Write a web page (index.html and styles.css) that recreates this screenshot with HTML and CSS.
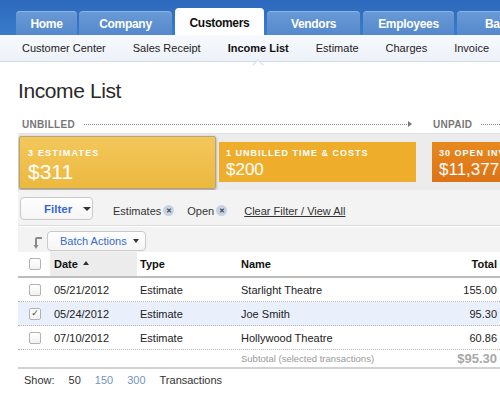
FILE: index.html
```
<!DOCTYPE html>
<html>
<head>
<meta charset="utf-8">
<link rel="stylesheet" href="styles.css">
</head>
<body>
<div class="page">
  <div class="topbar">
    <div class="tab t-home">Home</div>
    <div class="tab t-company">Company</div>
    <div class="tab active t-customers">Customers</div>
    <div class="tab t-vendors">Vendors</div>
    <div class="tab t-employees">Employees</div>
    <div class="tab t-banking">Banking</div>
  </div>
  <div class="subnav">
    <span class="sn">Customer Center</span>
    <span class="sn">Sales Receipt</span>
    <span class="sn current">Income List<span class="notch"></span></span>
    <span class="sn">Estimate</span>
    <span class="sn">Charges</span>
    <span class="sn">Invoice</span>
  </div>
  <h1 class="title">Income List</h1>
  <div class="stages">
    <span class="stage">UNBILLED</span>
    <span class="dots dots-long"><span class="arrowhead"></span></span>
    <span class="stage">UNPAID</span>
    <span class="dots"></span>
  </div>
  <div class="panel">
    <div class="cards">
      <div class="card card-est">
        <div class="card-label">3 ESTIMATES</div>
        <div class="card-amt">$311</div>
      </div>
      <div class="card card-time">
        <div class="card-label">1 UNBILLED TIME &amp; COSTS</div>
        <div class="card-amt">$200</div>
      </div>
      <div class="card card-open">
        <div class="card-label">30 OPEN INVOICES</div>
        <div class="card-amt">$11,377</div>
      </div>
    </div>
    <div class="filters">
      <button class="btn filter-btn">Filter <span class="caret"></span></button>
      <span class="chip">Estimates<span class="chip-x">&#x2715;</span></span>
      <span class="chip">Open<span class="chip-x">&#x2715;</span></span>
      <a class="clear">Clear Filter / View All</a>
    </div>
    <div class="batch">
      <svg class="batch-arrow" width="10" height="14" viewBox="0 0 10 14">
        <path d="M9 2 H4 Q3 2 3 3 V10" fill="none" stroke="#8a8a8a" stroke-width="2"/>
        <path d="M0.5 9 L3 13 L5.5 9 Z" fill="#8a8a8a"/>
      </svg>
      <button class="btn batch-btn">Batch Actions <span class="caret small"></span></button>
    </div>
    <div class="grid head">
      <div class="c-chk"><span class="chk"></span></div>
      <div class="c-date sorted">Date <span class="sort"></span></div>
      <div class="c-type">Type</div>
      <div class="c-name">Name</div>
      <div class="c-total">Total</div>
    </div>
    <div class="grid row">
      <div class="c-chk"><span class="chk"></span></div>
      <div class="c-date">05/21/2012</div>
      <div class="c-type">Estimate</div>
      <div class="c-name">Starlight Theatre</div>
      <div class="c-total">155.00</div>
    </div>
    <div class="grid row selected">
      <div class="c-chk"><span class="chk checked">&#x2713;</span></div>
      <div class="c-date">05/24/2012</div>
      <div class="c-type">Estimate</div>
      <div class="c-name">Joe Smith</div>
      <div class="c-total">95.30</div>
    </div>
    <div class="grid row">
      <div class="c-chk"><span class="chk"></span></div>
      <div class="c-date">07/10/2012</div>
      <div class="c-type">Estimate</div>
      <div class="c-name">Hollywood Theatre</div>
      <div class="c-total">60.86</div>
    </div>
    <div class="grid subtotal">
      <div class="c-chk"></div>
      <div class="c-date"></div>
      <div class="c-type"></div>
      <div class="c-name">Subtotal (selected transactions)</div>
      <div class="c-total">$95.30</div>
    </div>
  </div>
  <div class="show">
    <span>Show:</span>
    <span>50</span>
    <span class="link">150</span>
    <span class="link">300</span>
    <span>Transactions</span>
  </div>
</div>
</body>
</html>
```
FILE: styles.css
```
* { box-sizing: border-box; }
html, body { margin: 0; padding: 0; }
body {
  width: 500px;
  height: 400px;
  overflow: hidden;
  background: #fff;
  font-family: "Liberation Sans", Arial, sans-serif;
  color: #222;
}
.page { width: 500px; }

.topbar {
  height: 35px;
  background: linear-gradient(#2c68bb, #3a7dcc);
  display: flex;
  align-items: flex-end;
  padding-left: 16px;
  gap: 3px;
  white-space: nowrap;
  overflow: hidden;
}
.tab {
  flex: none;
  height: 24px;
  border-radius: 4px 4px 0 0;
  background: linear-gradient(#6a9ad6, #5489cc);
  color: #fff;
  font-weight: bold;
  font-size: 12px;
  letter-spacing: -0.3px;
  display: flex;
  align-items: center;
  justify-content: center;
  padding-top: 1px;
  box-shadow: inset 0 1px 0 rgba(255,255,255,0.25);
}
.t-home { width: 61px; }
.t-company { width: 93px; margin-left: -1px; }
.t-customers { width: 89px; }
.t-vendors { width: 93px; }
.t-employees { width: 91px; }
.t-banking { width: 91px; justify-content: flex-start; padding-left: 28px; }
.tab.active {
  height: 27px;
  background: #fff;
  color: #111;
  padding-top: 3px;
  box-shadow: none;
}

.subnav {
  height: 27px;
  background: linear-gradient(#f7f9fd, #edf2f9);
  border-bottom: 1px solid #cfdbea;
  display: flex;
  align-items: center;
  padding-left: 22px;
  gap: 27px;
  font-size: 11px;
  color: #222;
  white-space: nowrap;
}
.sn { position: relative; }
.sn.current { font-weight: bold; color: #111; }
.notch {
  position: absolute;
  left: 26px;
  top: 19px;
  width: 8px;
  height: 8px;
  background: #fff;
  border-left: 1px solid #cfdbea;
  border-top: 1px solid #cfdbea;
  transform: rotate(45deg);
}

.title {
  margin: 0;
  padding: 15px 0 0 18px;
  font-size: 21px;
  font-weight: normal;
  color: #2a2a2a;
  line-height: 28px;
  letter-spacing: -0.4px;
}

.stages {
  display: flex;
  align-items: center;
  padding-left: 22px;
  height: 12px;
  margin-top: 13px;
  font-size: 10px;
  font-weight: bold;
  color: #777;
  letter-spacing: 0.3px;
}
.dots {
  flex: 1;
  border-top: 1px dotted #8a8a8a;
  margin: 0 0 0 9px;
  position: relative;
  height: 0;
}
.dots-long { flex: none; width: 325px; margin-right: 24px; }
.arrowhead {
  position: absolute;
  right: -3px;
  top: -4px;
  width: 0; height: 0;
  border-left: 4px solid #777;
  border-top: 3px solid transparent;
  border-bottom: 3px solid transparent;
}

.panel {
  margin-left: 18px;
  margin-top: 3px;
}
.cards {
  background: #ececec;
  height: 57px;
  display: flex;
  align-items: center;
  gap: 3px;
  padding-left: 1px;
  border-top: 1px solid #e2e2e2;
  overflow: hidden;
  white-space: nowrap;
}
.card {
  flex: none;
  height: 40px;
  padding: 6px 0 0 7px;
  color: #fff;
  overflow: hidden;
}
.card-label {
  font-size: 9px;
  font-weight: bold;
  letter-spacing: 1px;
  line-height: 11px;
}
.card-amt {
  font-size: 17px;
  line-height: 20px;
  margin-top: 1px;
}
.card-est {
  width: 197px;
  height: 53px;
  background: linear-gradient(#f3c75c, #ecb93f);
  border: 1px solid #b7a37a;
  box-shadow: 0 1px 3px rgba(0,0,0,0.4);
  border-radius: 2px;
  padding: 11px 0 0 8px;
}
.card-est .card-label { letter-spacing: 1.2px; }
.card-est .card-amt { font-size: 21px; line-height: 24px; margin-top: 1px; }
.card-time { width: 197px; background: #eeae2c; }
.card-open { width: 80px; background: linear-gradient(#e7891f, #dc7317); margin-left: 13px; }

.filters {
  height: 36px;
  background: #f3f3f3;
  display: flex;
  align-items: center;
  padding-left: 2px;
  font-size: 11px;
  color: #333;
  border-bottom: 1px solid #dedede;
}
.btn {
  font-family: inherit;
  background: linear-gradient(#ffffff, #f5f5f5);
  border: 1px solid #c9c9c9;
  border-radius: 4px;
  display: flex;
  align-items: center;
  color: #3569d4;
  padding: 0;
}
.filter-btn {
  width: 73px;
  height: 23px;
  font-size: 11.5px;
  font-weight: bold;
  padding-left: 23px;
  gap: 11px;
  margin-top: 2px;
}
.caret {
  width: 0; height: 0;
  border-top: 4px solid #333;
  border-left: 4px solid transparent;
  border-right: 4px solid transparent;
}
.caret.small { border-top-width: 4px; border-left-width: 3.5px; border-right-width: 3.5px; }
.chip { display: flex; align-items: center; margin-top: 6px; }
.chip:first-of-type { margin-left: 20px; }
.chip + .chip { margin-left: 13px; }
.chip-x {
  width: 11px; height: 11px;
  border-radius: 50%;
  background: #c9d3df;
  color: #3a4a60;
  font-size: 7px;
  font-weight: bold;
  display: flex;
  align-items: center;
  justify-content: center;
  margin-left: 2px;
}
.clear {
  margin-left: 17px;
  margin-top: 6px;
  text-decoration: underline;
  color: #333;
}

.batch {
  height: 26px;
  background: #f3f3f3;
  border-top: 1px solid #fff;
  display: flex;
  align-items: center;
  padding-left: 15px;
}
.batch-arrow { margin-top: 7px; margin-right: 4px; }
.batch-btn {
  width: 99px;
  height: 20px;
  font-size: 11px;
  padding-left: 12px;
  gap: 6px;
  margin-top: 2px;
}

.grid {
  display: grid;
  grid-template-columns: 32px 87px 101px 1fr 90px;
  align-items: center;
  font-size: 11px;
}
.head {
  height: 26px;
  font-weight: bold;
  color: #111;
  border-bottom: 2px solid #bdbdbd;
}
.head > div { height: 100%; display: flex; align-items: center; }
.sorted { background: #ececec; }
.sort {
  display: inline-block;
  width: 0; height: 0;
  border-bottom: 4px solid #333;
  border-left: 3.5px solid transparent;
  border-right: 3.5px solid transparent;
  margin-left: 5px;
  margin-top: -2px;
}
.c-chk { padding-left: 11px; display: flex; align-items: center; }
.c-date { padding-left: 4px; }
.c-type { padding-left: 3px; }
.c-name { padding-left: 3px; }
.c-total { text-align: right; padding-right: 3px; justify-content: flex-end; }
.chk {
  width: 12px; height: 12px;
  border: 1px solid #b3b3b3;
  border-radius: 2px;
  background: linear-gradient(#fff, #f1f1f1);
  display: flex;
  align-items: center;
  justify-content: center;
  font-size: 9px;
  font-family: "DejaVu Sans", sans-serif;
  color: #444;
  line-height: 1;
}
.row {
  height: 24px;
  color: #222;
  border-bottom: 1px dotted #b8b8b8;
}
.row.selected { background: #e9f0fc; }
.subtotal {
  height: 19px;
  font-size: 9.5px;
  color: #999;
  border-bottom: 2px solid #d2d2d2;
}
.subtotal .c-total { font-size: 13px; font-weight: bold; color: #a8a8a8; }

.show {
  display: flex;
  gap: 14px;
  font-size: 11px;
  color: #333;
  padding: 5px 0 0 24px;
}
.show .link { color: #7294c4; }
```
